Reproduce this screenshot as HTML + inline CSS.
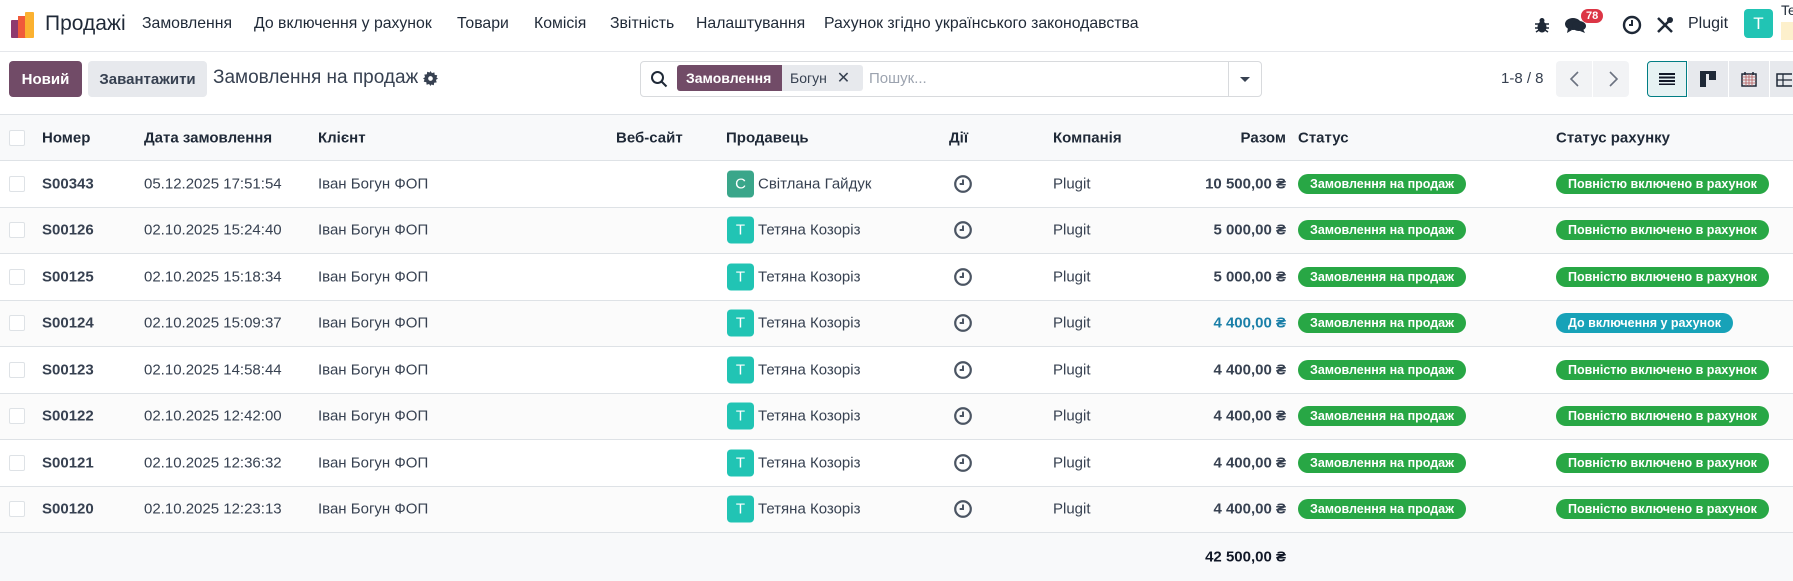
<!DOCTYPE html>
<html><head><meta charset="utf-8"><style>
*{box-sizing:border-box;margin:0;padding:0}
body{width:1793px;height:581px;overflow:hidden;background:#fff;font-family:"Liberation Sans","Noto Sans CJK SC",sans-serif;color:#374151;font-size:15px;position:relative}
.a{position:absolute;white-space:nowrap}
.nav{position:absolute;left:0;top:0;width:1793px;height:52px;border-bottom:1px solid #e5e7eb}
.nav .a{top:15px;font-size:15.8px;color:#1f2937}
.btn{position:absolute;top:61px;height:36px;border-radius:4px;font-size:15px;font-weight:bold;display:flex;align-items:center;justify-content:center}
.row{position:absolute;left:0;width:1793px;border-bottom:1px solid #dee2e6}
.row .a{top:50%;transform:translateY(-50%)}
.cb{left:9px;width:16px;height:16px;border:1px solid #dee2e6;background:#fff;border-radius:2px}
.badge{height:20px;border-radius:10px;color:#fff;font-weight:bold;font-size:12.5px;line-height:20px;padding:0 12px}
.g{background:#28a745}.t{background:#17a2b8}
.av{width:27px;height:27px;border-radius:4px;color:#fff;text-align:center;line-height:27px;font-size:15px}
.vb{position:absolute;top:61px;height:36px;width:40px;background:#e7e9ed;display:flex;align-items:center;justify-content:center}
</style></head><body>
<div class="nav">
 <svg class="a" style="left:11px;top:12px" width="24" height="26" viewBox="0 0 24 26"><rect x="0" y="8" width="8" height="18" rx="1" fill="#8e3a6e"/><rect x="7" y="4" width="8" height="22" fill="#f05a3a"/><rect x="14" y="0" width="9" height="26" rx="1" fill="#fbb130"/></svg>
 <span class="a" style="left:45px;top:12px;font-size:21px">Продажі</span>
 <span class="a" style="left:142px">Замовлення</span>
 <span class="a" style="left:254px">До включення у рахунок</span>
 <span class="a" style="left:457px">Товари</span>
 <span class="a" style="left:534px">Комісія</span>
 <span class="a" style="left:610px">Звітність</span>
 <span class="a" style="left:696px">Налаштування</span>
 <span class="a" style="left:824px">Рахунок згідно українського законодавства</span>
 <svg class="a" style="left:1535px;top:17px" width="14" height="16" viewBox="0 0 14 16"><ellipse cx="7" cy="10" rx="4.5" ry="5.5" fill="#1f2937"/><circle cx="7" cy="3.5" r="2.5" fill="#1f2937"/><path d="M0 7h14M0 11h14M1 15l3-2M13 15l-3-2" stroke="#1f2937" stroke-width="1.5"/></svg>
 <svg class="a" style="left:1565px;top:15px" width="22" height="20" viewBox="0 0 22 20"><ellipse cx="8" cy="9" rx="8" ry="6" fill="#1f2937"/><path d="M3 13l-1 5 5-3z" fill="#1f2937"/><ellipse cx="14" cy="11" rx="7" ry="5" fill="#1f2937"/><path d="M18 14l2 4-5-2z" fill="#1f2937"/></svg>
 <span class="a" style="left:1581px;top:9px;background:#dc3545;color:#fff;font-size:11px;font-weight:bold;border-radius:9px;padding:1px 5px">78</span>
 <svg class="a" style="left:1622px;top:15px" width="20" height="20" viewBox="0 0 20 20"><circle cx="10" cy="10" r="8" fill="none" stroke="#1f2937" stroke-width="2.4"/><path d="M10 5v5h-3" fill="none" stroke="#1f2937" stroke-width="2"/></svg>
 <svg class="a" style="left:1655px;top:15px" width="20" height="20" viewBox="0 0 20 20"><path d="M3 3l14 14M17 3L3 17" stroke="#1f2937" stroke-width="2.5"/><circle cx="15" cy="5" r="3" fill="#1f2937"/></svg>
 <span class="a" style="left:1688px;top:15px;font-size:16px">Plugit</span>
 <div class="a" style="left:1744px;top:9px;width:29px;height:29px;border-radius:4px;background:#21c4b4;color:#fff;text-align:center;line-height:29px;font-size:17px">T</div>
 <span class="a" style="left:1781px;top:2px;font-size:14px">Te</span>
 <div class="a" style="left:1781px;top:22px;width:12px;height:18px;background:#fdf0cc"></div>
</div>
<div class="btn" style="left:9px;width:73px;background:#714b67;color:#fff">Новий</div>
<div class="btn" style="left:88px;width:119px;background:#e7e9ed;color:#374151">Завантажити</div>
<span class="a" style="left:213px;top:67px;font-size:19px;color:#374151">Замовлення на продаж</span>
<svg class="a" style="left:423px;top:71px" width="15" height="15" viewBox="0 0 16 16"><path d="M8 0l1.5 2.2 2.6-.8.4 2.7 2.7.4-.8 2.6L16 8l-2.2 1.5.8 2.6-2.7.4-.4 2.7-2.6-.8L8 16l-1.5-2.2-2.6.8-.4-2.7-2.7-.4.8-2.6L0 8l2.2-1.5-.8-2.6 2.7-.4.4-2.7 2.6.8z" fill="#374151"/><circle cx="8" cy="8" r="2.5" fill="#fff"/></svg>
<div class="a" style="left:640px;top:61px;width:622px;height:36px;border:1px solid #d8dadd;border-radius:4px"></div>
<div class="a" style="left:1228px;top:61px;width:1px;height:36px;background:#d8dadd"></div>
<svg class="a" style="left:650px;top:70px" width="18" height="18" viewBox="0 0 18 18"><circle cx="7.5" cy="7.5" r="5.5" fill="none" stroke="#1f2937" stroke-width="2"/><path d="M11.5 11.5l5 5" stroke="#1f2937" stroke-width="2"/></svg>
<div class="a" style="left:677px;top:65px;width:105px;height:26px;background:#714b67;color:#fff;font-weight:bold;font-size:14px;line-height:26px;padding-left:9px;border-radius:3px 0 0 3px">Замовлення</div>
<div class="a" style="left:782px;top:65px;width:81px;height:26px;background:#e7e9ed;color:#374151;font-size:14px;line-height:26px;padding-left:8px;border-radius:0 3px 3px 0">Богун <span style="margin-left:6px;font-size:16px">✕</span></div>
<span class="a" style="left:869px;top:70px;color:#9ca3af;font-size:15px">Пошук...</span>
<div class="a" style="left:1240px;top:77px;width:0;height:0;border-left:5px solid transparent;border-right:5px solid transparent;border-top:5px solid #374151"></div>
<span class="a" style="left:1501px;top:70px;font-size:15px">1-8 / 8</span>
<div class="a" style="left:1556px;top:61px;width:73px;height:36px;background:#f2f3f5;border-radius:4px"></div>
<div class="a" style="left:1592px;top:61px;width:1px;height:36px;background:#fff"></div>
<svg class="a" style="left:1568px;top:70px" width="60" height="18" viewBox="0 0 60 18"><path d="M10 2l-7 7 7 7M42 2l7 7-7 7" fill="none" stroke="#6b7280" stroke-width="1.6"/></svg>
<div class="vb" style="left:1647px;width:40px;background:#e6f2f3;border:1px solid #017e84;border-radius:4px 0 0 4px"><svg width="16" height="12"><path d="M0 1h16M0 4.5h16M0 8h16M0 11.5h16" stroke="#111827" stroke-width="2"/></svg></div>
<div class="vb" style="left:1688px"><svg width="16" height="16"><rect x="0" y="0" width="16" height="3" fill="#1f2937"/><rect x="0" y="0" width="6" height="16" fill="#1f2937"/><rect x="9" y="0" width="7" height="9" fill="#1f2937"/></svg></div>
<div class="vb" style="left:1729px"><svg width="16" height="16"><rect x="1" y="3" width="14" height="12" fill="none" stroke="#1f2937" stroke-width="1.5"/><path d="M1 6h14M5 3v12M8 3v12M11 3v12M1 9h14M1 12h14" stroke="#b45a5a" stroke-width=".8"/><path d="M4 1v3M12 1v3" stroke="#1f2937" stroke-width="1.5"/></svg></div>
<div class="vb" style="left:1770px;width:30px;justify-content:flex-start;padding-left:6px"><svg width="16" height="16"><rect x="1" y="3" width="16" height="12" fill="none" stroke="#1f2937" stroke-width="1.5"/><path d="M1 9h16M7 3v12" stroke="#1f2937" stroke-width="1.2"/></svg></div>

<div class="row" style="top:114px;height:47px;background:#f8f9fa;border-top:1px solid #dee2e6;font-weight:bold;color:#1f2937">
 <div class="a cb"></div>
 <span class="a" style="left:42px">Номер</span>
 <span class="a" style="left:144px">Дата замовлення</span>
 <span class="a" style="left:318px">Клієнт</span>
 <span class="a" style="left:616px">Веб-сайт</span>
 <span class="a" style="left:726px">Продавець</span>
 <span class="a" style="left:949px">Дії</span>
 <span class="a" style="left:1053px">Компанія</span>
 <span class="a" style="right:507px">Разом</span>
 <span class="a" style="left:1298px">Статус</span>
 <span class="a" style="left:1556px">Статус рахунку</span>
</div>

<div class="row" style="top:161px;height:46.5px"><div class="a cb"></div><b class="a" style="left:42px">S00343</b><span class="a" style="left:144px">05.12.2025 17:51:54</span><span class="a" style="left:318px">Іван Богун ФОП</span><div class="a av" style="left:727px;background:#3aa68a">C</div><span class="a" style="left:758px">Світлана Гайдук</span><svg class="a" style="left:953px" width="20" height="20" viewBox="0 0 18 18"><circle cx="9" cy="9" r="7" fill="none" stroke="#4b5563" stroke-width="2"/><path d="M9 5v4h-3" fill="none" stroke="#4b5563" stroke-width="1.8"/></svg><span class="a" style="left:1053px">Plugit</span><b class="a" style="right:507px">10 500,00 ₴</b><span class="a badge g" style="left:1298px">Замовлення на продаж</span><span class="a badge g" style="left:1556px">Повністю включено в рахунок</span></div>
<div class="row" style="top:207.5px;height:46.5px;background:#fbfbfb"><div class="a cb"></div><b class="a" style="left:42px">S00126</b><span class="a" style="left:144px">02.10.2025 15:24:40</span><span class="a" style="left:318px">Іван Богун ФОП</span><div class="a av" style="left:727px;background:#21c4b4">T</div><span class="a" style="left:758px">Тетяна Козоріз</span><svg class="a" style="left:953px" width="20" height="20" viewBox="0 0 18 18"><circle cx="9" cy="9" r="7" fill="none" stroke="#4b5563" stroke-width="2"/><path d="M9 5v4h-3" fill="none" stroke="#4b5563" stroke-width="1.8"/></svg><span class="a" style="left:1053px">Plugit</span><b class="a" style="right:507px">5 000,00 ₴</b><span class="a badge g" style="left:1298px">Замовлення на продаж</span><span class="a badge g" style="left:1556px">Повністю включено в рахунок</span></div>
<div class="row" style="top:254px;height:46.5px"><div class="a cb"></div><b class="a" style="left:42px">S00125</b><span class="a" style="left:144px">02.10.2025 15:18:34</span><span class="a" style="left:318px">Іван Богун ФОП</span><div class="a av" style="left:727px;background:#21c4b4">T</div><span class="a" style="left:758px">Тетяна Козоріз</span><svg class="a" style="left:953px" width="20" height="20" viewBox="0 0 18 18"><circle cx="9" cy="9" r="7" fill="none" stroke="#4b5563" stroke-width="2"/><path d="M9 5v4h-3" fill="none" stroke="#4b5563" stroke-width="1.8"/></svg><span class="a" style="left:1053px">Plugit</span><b class="a" style="right:507px">5 000,00 ₴</b><span class="a badge g" style="left:1298px">Замовлення на продаж</span><span class="a badge g" style="left:1556px">Повністю включено в рахунок</span></div>
<div class="row" style="top:300.5px;height:46.5px;background:#fbfbfb"><div class="a cb"></div><b class="a" style="left:42px">S00124</b><span class="a" style="left:144px">02.10.2025 15:09:37</span><span class="a" style="left:318px">Іван Богун ФОП</span><div class="a av" style="left:727px;background:#21c4b4">T</div><span class="a" style="left:758px">Тетяна Козоріз</span><svg class="a" style="left:953px" width="20" height="20" viewBox="0 0 18 18"><circle cx="9" cy="9" r="7" fill="none" stroke="#4b5563" stroke-width="2"/><path d="M9 5v4h-3" fill="none" stroke="#4b5563" stroke-width="1.8"/></svg><span class="a" style="left:1053px">Plugit</span><b class="a" style="right:507px;color:#1a7fa8">4 400,00 ₴</b><span class="a badge g" style="left:1298px">Замовлення на продаж</span><span class="a badge t" style="left:1556px">До включення у рахунок</span></div>
<div class="row" style="top:347px;height:46.5px"><div class="a cb"></div><b class="a" style="left:42px">S00123</b><span class="a" style="left:144px">02.10.2025 14:58:44</span><span class="a" style="left:318px">Іван Богун ФОП</span><div class="a av" style="left:727px;background:#21c4b4">T</div><span class="a" style="left:758px">Тетяна Козоріз</span><svg class="a" style="left:953px" width="20" height="20" viewBox="0 0 18 18"><circle cx="9" cy="9" r="7" fill="none" stroke="#4b5563" stroke-width="2"/><path d="M9 5v4h-3" fill="none" stroke="#4b5563" stroke-width="1.8"/></svg><span class="a" style="left:1053px">Plugit</span><b class="a" style="right:507px">4 400,00 ₴</b><span class="a badge g" style="left:1298px">Замовлення на продаж</span><span class="a badge g" style="left:1556px">Повністю включено в рахунок</span></div>
<div class="row" style="top:393.5px;height:46.5px;background:#fbfbfb"><div class="a cb"></div><b class="a" style="left:42px">S00122</b><span class="a" style="left:144px">02.10.2025 12:42:00</span><span class="a" style="left:318px">Іван Богун ФОП</span><div class="a av" style="left:727px;background:#21c4b4">T</div><span class="a" style="left:758px">Тетяна Козоріз</span><svg class="a" style="left:953px" width="20" height="20" viewBox="0 0 18 18"><circle cx="9" cy="9" r="7" fill="none" stroke="#4b5563" stroke-width="2"/><path d="M9 5v4h-3" fill="none" stroke="#4b5563" stroke-width="1.8"/></svg><span class="a" style="left:1053px">Plugit</span><b class="a" style="right:507px">4 400,00 ₴</b><span class="a badge g" style="left:1298px">Замовлення на продаж</span><span class="a badge g" style="left:1556px">Повністю включено в рахунок</span></div>
<div class="row" style="top:440px;height:46.5px"><div class="a cb"></div><b class="a" style="left:42px">S00121</b><span class="a" style="left:144px">02.10.2025 12:36:32</span><span class="a" style="left:318px">Іван Богун ФОП</span><div class="a av" style="left:727px;background:#21c4b4">T</div><span class="a" style="left:758px">Тетяна Козоріз</span><svg class="a" style="left:953px" width="20" height="20" viewBox="0 0 18 18"><circle cx="9" cy="9" r="7" fill="none" stroke="#4b5563" stroke-width="2"/><path d="M9 5v4h-3" fill="none" stroke="#4b5563" stroke-width="1.8"/></svg><span class="a" style="left:1053px">Plugit</span><b class="a" style="right:507px">4 400,00 ₴</b><span class="a badge g" style="left:1298px">Замовлення на продаж</span><span class="a badge g" style="left:1556px">Повністю включено в рахунок</span></div>
<div class="row" style="top:486.5px;height:46.5px;background:#fbfbfb"><div class="a cb"></div><b class="a" style="left:42px">S00120</b><span class="a" style="left:144px">02.10.2025 12:23:13</span><span class="a" style="left:318px">Іван Богун ФОП</span><div class="a av" style="left:727px;background:#21c4b4">T</div><span class="a" style="left:758px">Тетяна Козоріз</span><svg class="a" style="left:953px" width="20" height="20" viewBox="0 0 18 18"><circle cx="9" cy="9" r="7" fill="none" stroke="#4b5563" stroke-width="2"/><path d="M9 5v4h-3" fill="none" stroke="#4b5563" stroke-width="1.8"/></svg><span class="a" style="left:1053px">Plugit</span><b class="a" style="right:507px">4 400,00 ₴</b><span class="a badge g" style="left:1298px">Замовлення на продаж</span><span class="a badge g" style="left:1556px">Повністю включено в рахунок</span></div>
<div class="row" style="top:533px;height:48px;background:#f8f9fa;border-bottom:none"><b class="a" style="right:507px;color:#111827">42 500,00 ₴</b></div>
</body></html>
